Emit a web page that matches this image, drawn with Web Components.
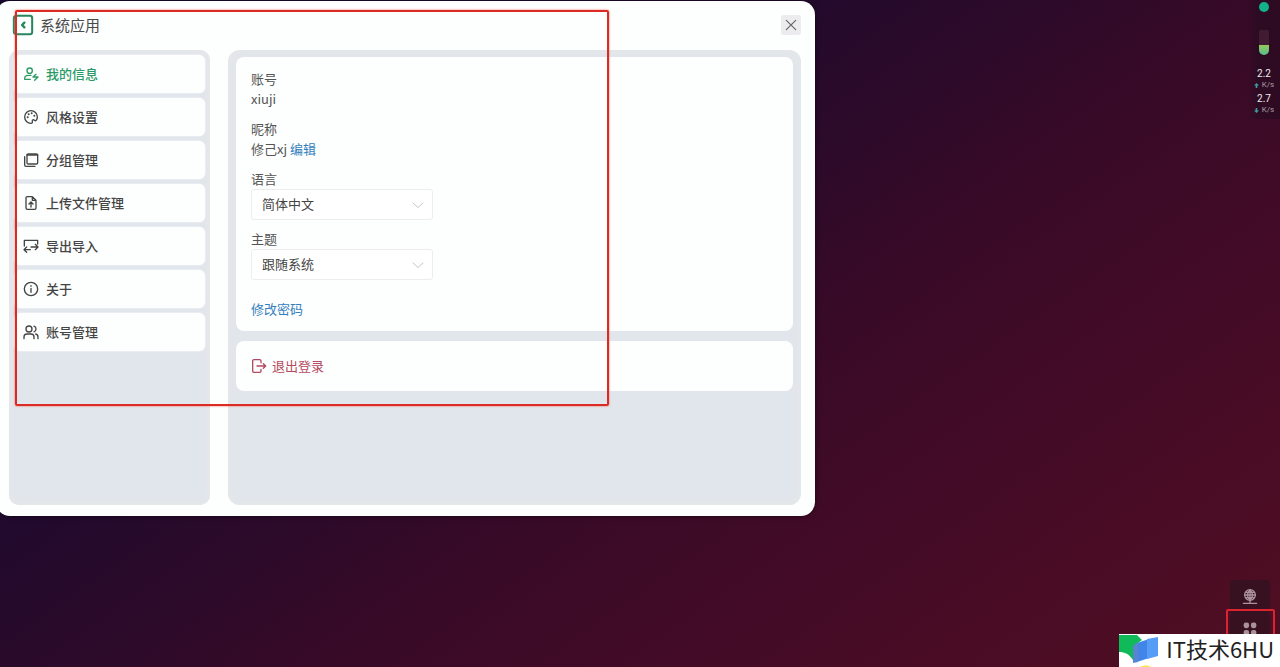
<!DOCTYPE html>
<html lang="zh-CN">
<head>
<meta charset="utf-8">
<meta name="viewport" content="width=device-width, initial-scale=1">
<title>系统应用</title>
<style>
html { height: 100%; }
body {
  margin: 0; min-height: 100%;
  font: 13px/20px "Noto Sans CJK SC", "Noto Sans", sans-serif;
  color: #444;
  background: linear-gradient(145deg, #190a30 0%, #1f0a2e 32%, #2c0a2a 46%, #380a27 58%, #410b27 70%, #4a0c25 85%, #4f0f22 100%) fixed;
}
</style>
</head>
<body>
<desk-top>
  <app-window slot="window" heading="系统应用">
    <side-nav slot="nav">
      <nav-item icon="user" active>我的信息</nav-item>
      <nav-item icon="palette">风格设置</nav-item>
      <nav-item icon="group">分组管理</nav-item>
      <nav-item icon="upload">上传文件管理</nav-item>
      <nav-item icon="swap">导出导入</nav-item>
      <nav-item icon="info">关于</nav-item>
      <nav-item icon="users">账号管理</nav-item>
    </side-nav>
    <panel-card><profile-form></profile-form></panel-card>
    <panel-card><logout-button>退出登录</logout-button></panel-card>
  </app-window>
  <system-monitor slot="side"></system-monitor>
  <quick-dock slot="side"></quick-dock>
  <site-badge slot="badge">IT技术6HU</site-badge>
</desk-top>

<script>
const define = (name, html, setup) => {
  const t = document.createElement('template');
  t.innerHTML = html;
  customElements.define(name, class extends HTMLElement {
    constructor() {
      super();
      this.attachShadow({ mode: 'open' }).append(t.content.cloneNode(true));
    }
    connectedCallback() { if (setup) setup(this, this.shadowRoot); }
  });
};

const ICONS = {
  back: '<rect x="2" y="2" width="20" height="20" rx="2.5" stroke-width="2.2"/><path d="M13.5 9.500 11 12l2.500 2.500" stroke-width="2.6"/>',
  user: '<circle cx="10" cy="7" r="4"/><path d="M12 14H8c-3.500 0-5.500 2-5.500 4.500V20H11M19.500 12.500l-4.500 4h7.500l-5 5"/>',
  palette: '<path d="M12 2.500A9.500 9.500 0 1 0 12 21.500c1.600 0 2.400-1 2-2.500-.500-2 .500-3 2-3l2 1.500c2 .500 3.500-2.500 3.500-5.500A9.500 9.500 0 0 0 12 2.500z"/><g fill="currentColor" stroke="none"><circle cx="7" cy="12.500" r="1.500"/><circle cx="8.500" cy="8" r="1.500"/><circle cx="13" cy="6.500" r="1.500"/><circle cx="17" cy="10" r="1.500"/></g>',
  group: '<rect x="6" y="3" width="16" height="15" rx="2"/><path d="M6 4.500h16" stroke-width="2.500"/><path d="M2.500 7v12.500a2 2 0 0 0 2 2H18"/>',
  upload: '<path d="M14 2.500H6.500a2 2 0 0 0-2 2v15a2 2 0 0 0 2 2h11a2 2 0 0 0 2-2V8zM14 2.500V8h5.500M12 18v-7M9 13.500l3-3 3 3"/>',
  swap: '<path d="M2 12V3.500h20V9M2 17.500h9M5.500 13.500l-4 4 4 4M12 13.500h10M18.500 9.500l4 4-4 4"/>',
  info: '<circle cx="12" cy="12" r="10"/><path d="M12 11v6M12 7v1"/>',
  users: '<circle cx="9" cy="7.500" r="4.500"/><path d="M1.500 22v-2.500c0-2.500 2-4.500 4.500-4.500h6c2.500 0 4.500 2 4.500 4.500V22M16.500 3.200a4.500 4.500 0 0 1 0 8.500M19 15c2.200.500 3.500 2.200 3.500 4.500V22"/>',
  logout: '<path d="M15 7V4.500a2 2 0 0 0-2-2H4.500a2 2 0 0 0-2 2v15a2 2 0 0 0 2 2H13a2 2 0 0 0 2-2V17M9 12h13M18.500 8.500 22 12l-3.500 3.500"/>',
  close: '<path d="M4 4l16 16M20 4 4 20"/>',
  chevron: '<path d="M2 8l10 9L22 8"/>',
  globe: '<circle cx="12" cy="9" r="8"/><path d="M4 9h16M12 1v20M5.500 5h13M5.500 13h13M12 1c-5 4-5 12 0 16M12 1c5 4 5 12 0 16M2 21.500h20"/>',
  grid: '<g fill="currentColor" stroke="none"><rect x="1" y="1" width="9.500" height="9.500" rx="4"/><rect x="13.500" y="1" width="9.500" height="9.500" rx="4"/><rect x="1" y="13.500" width="9.500" height="9.500" rx="4"/><rect x="13.500" y="13.500" width="9.500" height="9.500" rx="4"/></g>'
};

define('desk-top', `<style>
  :host { display: grid; grid-template-columns: 64% 1fr; min-height: 100vh; position: relative; overflow: hidden; }
  .side { display: flex; flex-direction: column; justify-content: space-between; align-items: flex-end; }
  .badge { position: absolute; right: 0; bottom: 0; }
</style>
<div><slot name="window"></slot></div>
<div class="side"><slot name="side"></slot></div>
<div class="badge"><slot name="badge"></slot></div>
<mark-frame></mark-frame>`);

define('mark-frame', `<style>
  :host { position: absolute; left: 15px; top: 10px; width: 590px; height: 392px;
    border: 2px solid #dc2a24; border-radius: 2px; box-shadow: 0 0 2px #f0503c; pointer-events: none; }
</style>`);

define('app-window', `<style>
  :host { display: block; margin: 1px 4px 0 -4px; padding: 14px 14px 11px 13px; background: #fdfefe; border-radius: 14px; box-shadow: 0 0 5px #0008; }
  header { display: flex; align-items: center; gap: 7px; margin: 0 0 15px 4px; height: 20px; }
  h1 { flex: 1; margin: 0; font-size: 15px; font-weight: 400; line-height: 20px; color: #4a4a4a; }
  button { border: 0; padding: 0; background: none; cursor: pointer; }
  .back { color: #27865b; }
  .back ui-icon { width: 22px; height: 22px; margin: -1px; }
  .close { display: grid; place-items: center; width: 20px; height: 20px; background: #ececee; border-radius: 3px; color: #666; }
  .close ui-icon { width: 14px; height: 14px; }
  .body { display: flex; gap: 18px; }
  main { flex: 1; box-sizing: border-box; min-height: 455px; padding: 7px 8px; background: #e1e6ec; border-radius: 12px;
    display: flex; flex-direction: column; gap: 10px; box-shadow: inset 0 0 8px 3px #e4e7e9; }
</style>
<header>
  <button class="back" aria-label="返回"><ui-icon name="back"></ui-icon></button>
  <h1></h1>
  <button class="close" aria-label="关闭"><ui-icon name="close"></ui-icon></button>
</header>
<div class="body"><slot name="nav"></slot><main><slot></slot></main></div>`,
  (el, root) => { root.querySelector('h1').textContent = el.getAttribute('heading'); });

define('side-nav', `<style>
  :host { display: block; flex: none; box-sizing: border-box; width: 201px; padding: 5px; background: #e1e6ec; border-radius: 10px; box-shadow: inset 0 0 8px 3px #e4e7e9; }
  nav { display: flex; flex-direction: column; gap: 5px; }
</style><nav><slot></slot></nav>`);

define('nav-item', `<style>
  :host { display: block; }
  button { display: flex; align-items: center; gap: 7px; width: 100%; height: 38px; padding: 0 9px; border: 0;
    border-radius: 6px; background: #fdfefe; color: #444; font: inherit; font-weight: 500; cursor: pointer; box-shadow: 0 0 2px #fff; }
  :host([active]) button { color: #2b9a66; }
</style><button><ui-icon></ui-icon><span><slot></slot></span></button>`,
  (el, root) => root.querySelector('ui-icon').setAttribute('name', el.getAttribute('icon')));

define('panel-card', `<style>
  :host { display: block; padding: 12px 15px; background: #fdfefe; border-radius: 8px; }
</style><slot></slot>`);

define('profile-form', `<style>
  :host { display: flex; flex-direction: column; gap: 9px; color: #555; }
  dl { display: contents; }
  dt { line-height: 20px; }
  dd { margin: 0; line-height: 20px; padding-bottom: 1px; }
  a { color: #3480bd; text-decoration: none; }
  .link { margin-top: 10px; line-height: 20px; }
</style>
<dl>
  <div><dt>账号</dt><dd>xiuji</dd></div>
  <div><dt>昵称</dt><dd>修己xj <a href="#nickname">编辑</a></dd></div>
</dl>
<select-field label="语言" options="简体中文,English"></select-field>
<select-field label="主题" options="跟随系统,浅色,深色"></select-field>
<div class="link"><a href="#password">修改密码</a></div>`);

define('select-field', `<style>
  :host { display: block; }
  label { display: block; line-height: 20px; }
  .box { display: grid; align-items: center; width: 182px; }
  select, ui-icon { grid-area: 1 / 1; }
  select { appearance: none; width: 100%; height: 31px; padding: 0 10px 1px; border: 1px solid #eceeee; border-radius: 3px;
    background: #fff; color: #444; font: inherit; }
  ui-icon { justify-self: end; width: 12px; height: 12px; margin-right: 9px; color: #c4c6c8; pointer-events: none; }
</style>
<label for="field"></label>
<div class="box"><select id="field"></select><ui-icon name="chevron"></ui-icon></div>`,
  (el, root) => {
    root.querySelector('label').textContent = el.getAttribute('label');
    root.querySelector('select').replaceChildren(...el.getAttribute('options').split(',').map(o => new Option(o)));
  });

define('logout-button', `<style>
  :host { display: block; }
  button { display: flex; align-items: center; gap: 5px; height: 26px; padding: 0; border: 0; background: none; color: #b44860; font: inherit; cursor: pointer; }
</style><button><ui-icon name="logout"></ui-icon><span><slot></slot></span></button>`);

define('system-monitor', `<style>
  :host { display: flex; flex-direction: column; align-items: center; box-sizing: border-box; width: 32px; height: 119px; padding-top: 2px;
    background: linear-gradient(90deg, transparent, #260b20a0 30%); color: #eee; font: 10px/12px Roboto, sans-serif; }
  .dot { width: 10px; height: 10px; border-radius: 50%; background: #12b18b; }
  .bar { display: flex; align-items: flex-end; width: 10px; height: 25px; margin: 18px 0 13px; border-radius: 2px 2px 5px 5px; overflow: hidden; background: #401b32; }
  .bar i { width: 100%; height: 10px; background: linear-gradient(#93c95d, #57bd8c); }
  .rate { text-align: center; height: 25px; }
  .rate div { display: flex; align-items: center; gap: 3px; font-size: 8px; line-height: 10px; color: #a99ba5; }
  svg { width: 5px; height: 5px; fill: #3e9c9c; }
</style>
<div class="dot"></div>
<div class="bar"><i></i></div>
<div class="rate">2.2<div><svg viewBox="0 0 6 6"><path d="M3 0 6 3H4v3H2V3H0z"/></svg>K/s</div></div>
<div class="rate">2.7<div><svg viewBox="0 0 6 6"><path d="M3 6 0 3h2V0h2v3h2z"/></svg>K/s</div></div>`);

define('quick-dock', `<style>
  :host { display: flex; flex-direction: column; position: relative; width: 40px; height: 87px; margin-right: 10px; }
  button { display: grid; place-items: center; height: 34px; padding: 0; border: 0; border-radius: 4px; background: #381121; color: #aa929c; cursor: pointer; }
  button + button { height: 30px; }
  .apps ui-icon { width: 14px; height: 14px; }
  .mark { position: absolute; left: -4px; top: 29px; width: 45px; height: 50px; border: 2px solid #dc2430; border-radius: 2px; }
</style>
<button aria-label="网络"><ui-icon name="globe"></ui-icon></button>
<button class="apps" aria-label="应用"><ui-icon name="grid"></ui-icon></button>
<div class="mark"></div>`);

define('site-badge', `<style>
  :host { display: flex; gap: 7px; height: 33px; padding-right: 6px; background: #fff; color: #222; font-size: 22px; line-height: 28px; white-space: nowrap; }
  svg { display: block; width: 40px; height: 33px; }
</style>
<svg viewBox="0 0 40 33" aria-hidden="true">
  <path d="M0 1h18l5 5-8 6-1 14C10 20 6 18 0 18z" fill="#10ba58"/>
  <path d="M18 9l12-4v19l-12 4z" fill="#4285e8"/>
  <path d="M14 12l5-4v20l-5 1z" fill="#5a84d0"/>
  <path d="M28 5l11-2v19l-11 3z" fill="#559df7"/>
  <path d="M21 33c3-2 9-2 11 0z" fill="#ffe34a"/>
</svg>
<span><slot></slot></span>`);

/* last, so that nested icons already carry their name when they upgrade */
define('ui-icon', `<style>
  :host { display: block; flex: none; width: 16px; height: 16px; }
  svg { display: block; width: 100%; height: 100%; }
</style>
<svg viewBox="0 0 24 24" fill="none" stroke="currentColor" stroke-width="2" stroke-linecap="round" stroke-linejoin="round" aria-hidden="true"></svg>`,
  (el, root) => { root.querySelector('svg').innerHTML = ICONS[el.getAttribute('name')] || ''; });
</script>
</body>
</html>
